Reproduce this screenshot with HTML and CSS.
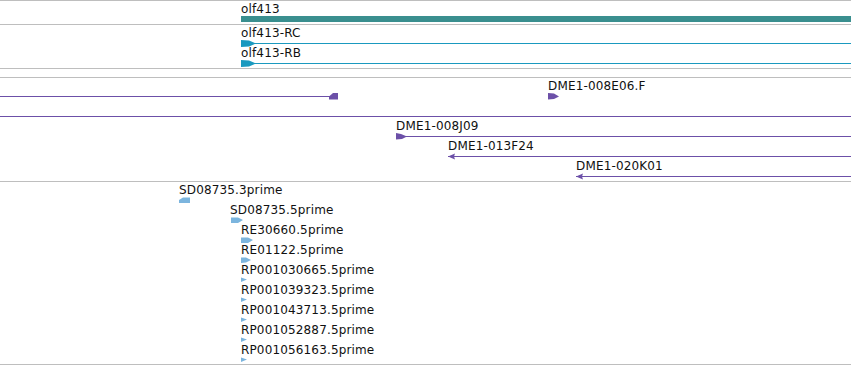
FILE: index.html
```html
<!DOCTYPE html>
<html>
<head>
    <meta charset="utf-8">
    <title>olf413 tracks</title>
    <link rel="stylesheet" href="styles.css">
</head>
<body>
<div class="view">

    <!-- gene -->
    <div class="track">
        <div class="row">
            <div class="feat" style="left: 241px; width: 620px;">
                <div class="label">olf413</div>
                <svg class="glyph" width="620" height="7"><rect class="gene" x="0" y="0" width="620" height="6"/></svg>
            </div>
        </div>
    </div>

    <!-- transcripts -->
    <div class="track">
        <div class="row">
            <div class="feat" style="left: 241px; width: 620px;">
                <div class="label">olf413-RC</div>
                <svg class="glyph" width="620" height="7">
                    <rect class="mrna" x="0" y="3" width="620" height="1"/>
                    <polygon class="mrna" points="0,0 8,0.5 15,3.5 8,6.5 0,7"/>
                </svg>
            </div>
        </div>
        <div class="row">
            <div class="feat" style="left: 241px; width: 620px;">
                <div class="label">olf413-RB</div>
                <svg class="glyph" width="620" height="7">
                    <rect class="mrna" x="0" y="3" width="620" height="1"/>
                    <polygon class="mrna" points="0,0 8,0.5 15,3.5 8,6.5 0,7"/>
                </svg>
            </div>
        </div>
    </div>

    <!-- empty track -->
    <div class="track track-empty"></div>

    <!-- BAC / clone ends -->
    <div class="track">
        <div class="row">
            <div class="feat" style="left: 0px; width: 338px;">
                <div class="label"></div>
                <svg class="glyph" width="338" height="7">
                    <rect class="clone" x="0" y="3" width="331" height="1"/>
                    <polygon class="clone" points="329,3.5 333,0 339,0 339,6.5 329,6.5"/>
                </svg>
            </div>
            <div class="feat" style="left: 548px; width: 120px;">
                <div class="label">DME1-008E06.F</div>
                <svg class="glyph" width="120" height="7">
                    <polygon class="clone" points="0,0 6,0.5 11,3.5 6,6 0,6.5"/>
                </svg>
            </div>
        </div>
        <div class="row">
            <div class="feat" style="left: 0px; width: 851px;">
                <div class="label"></div>
                <svg class="glyph" width="851" height="7"><rect class="clone" x="0" y="3" width="851" height="1"/></svg>
            </div>
        </div>
        <div class="row">
            <div class="feat" style="left: 396px; width: 460px;">
                <div class="label">DME1-008J09</div>
                <svg class="glyph" width="460" height="7">
                    <rect class="clone" x="0" y="3" width="460" height="1"/>
                    <polygon class="clone" points="0,0 5,1 11,3.5 6,6 0,6.5"/>
                </svg>
            </div>
        </div>
        <div class="row">
            <div class="feat" style="left: 448px; width: 410px;">
                <div class="label">DME1-013F24</div>
                <svg class="glyph" width="410" height="7">
                    <rect class="clone" x="0" y="3" width="410" height="1"/>
                    <polygon class="clone" points="0,3.5 7,0.5 6,3.5 7,6.5"/>
                </svg>
            </div>
        </div>
        <div class="row">
            <div class="feat" style="left: 576px; width: 290px;">
                <div class="label">DME1-020K01</div>
                <svg class="glyph" width="290" height="7">
                    <rect class="clone" x="0" y="3" width="290" height="1"/>
                    <polygon class="clone" points="0,3.5 7,0.5 6,3.5 7,6.5"/>
                </svg>
            </div>
        </div>
    </div>

    <!-- EST reads -->
    <div class="track track-last">
        <div class="row">
            <div class="feat" style="left: 179px; width: 130px;">
                <div class="label">SD08735.3prime</div>
                <svg class="glyph" width="130" height="7"><polygon class="est" points="0,3 4,0.5 11,0.5 11,6 0,6"/></svg>
            </div>
        </div>
        <div class="row">
            <div class="feat" style="left: 230px; width: 130px;">
                <div class="label">SD08735.5prime</div>
                <svg class="glyph" width="130" height="7"><polygon class="est" points="1,0.5 8,0.5 13,3 8,6 1,6"/></svg>
            </div>
        </div>
        <div class="row">
            <div class="feat" style="left: 241px; width: 130px;">
                <div class="label">RE30660.5prime</div>
                <svg class="glyph" width="130" height="7"><polygon class="est" points="0,0.5 7,0.5 12,3 7,6 0,6"/></svg>
            </div>
        </div>
        <div class="row">
            <div class="feat" style="left: 241px; width: 130px;">
                <div class="label">RE01122.5prime</div>
                <svg class="glyph" width="130" height="7"><polygon class="est" points="0,0.5 5,0.5 10,3 5,5.5 0,6"/></svg>
            </div>
        </div>
        <div class="row">
            <div class="feat" style="left: 241px; width: 150px;">
                <div class="label">RP001030665.5prime</div>
                <svg class="glyph" width="150" height="7"><polygon class="est" points="0,0.5 6,2.5 0,5"/></svg>
            </div>
        </div>
        <div class="row">
            <div class="feat" style="left: 241px; width: 150px;">
                <div class="label">RP001039323.5prime</div>
                <svg class="glyph" width="150" height="7"><polygon class="est" points="0,0.5 6,2.5 0,5"/></svg>
            </div>
        </div>
        <div class="row">
            <div class="feat" style="left: 241px; width: 150px;">
                <div class="label">RP001043713.5prime</div>
                <svg class="glyph" width="150" height="7"><polygon class="est" points="0,0.5 6,2.5 0,5"/></svg>
            </div>
        </div>
        <div class="row">
            <div class="feat" style="left: 241px; width: 150px;">
                <div class="label">RP001052887.5prime</div>
                <svg class="glyph" width="150" height="7"><polygon class="est" points="0,0.5 6,2.5 0,5"/></svg>
            </div>
        </div>
        <div class="row">
            <div class="feat" style="left: 241px; width: 150px;">
                <div class="label">RP001056163.5prime</div>
                <svg class="glyph" width="150" height="7"><polygon class="est" points="0,0.5 6,2.5 0,5"/></svg>
            </div>
        </div>
    </div>

</div>
</body>
</html>
```

FILE: styles.css
```css
html, body {
    overflow: hidden;
}

body, div {
    margin: 0;
    padding: 0;
}

body {
    color: #111;
    background: #fff;
    font: 12px/14px "DejaVu Sans", sans-serif;
}

.view {
    width: 851px;
    border-top: 1px solid #bebebe;
}

.track {
    padding-bottom: 3px;
    border-bottom: 1px solid #bebebe;
}

.track-empty {
    height: 5px;
}

.track-last {
    padding-bottom: 2px;
}

.row {
    position: relative;
    height: 20px;
}

.feat {
    position: absolute;
    top: 0;
}

.label {
    height: 14px;
    margin-top: 1px;
    white-space: nowrap;
    letter-spacing: 0.15px;
}

.glyph {
    display: block;
}

.glyph rect {
    shape-rendering: crispEdges;
}

.gene {
    fill: #3a8f8f;
}

.mrna {
    fill: #1a99bf;
}

.clone {
    fill: #6c50a8;
}

.est {
    fill: #7cb5de;
}
```
